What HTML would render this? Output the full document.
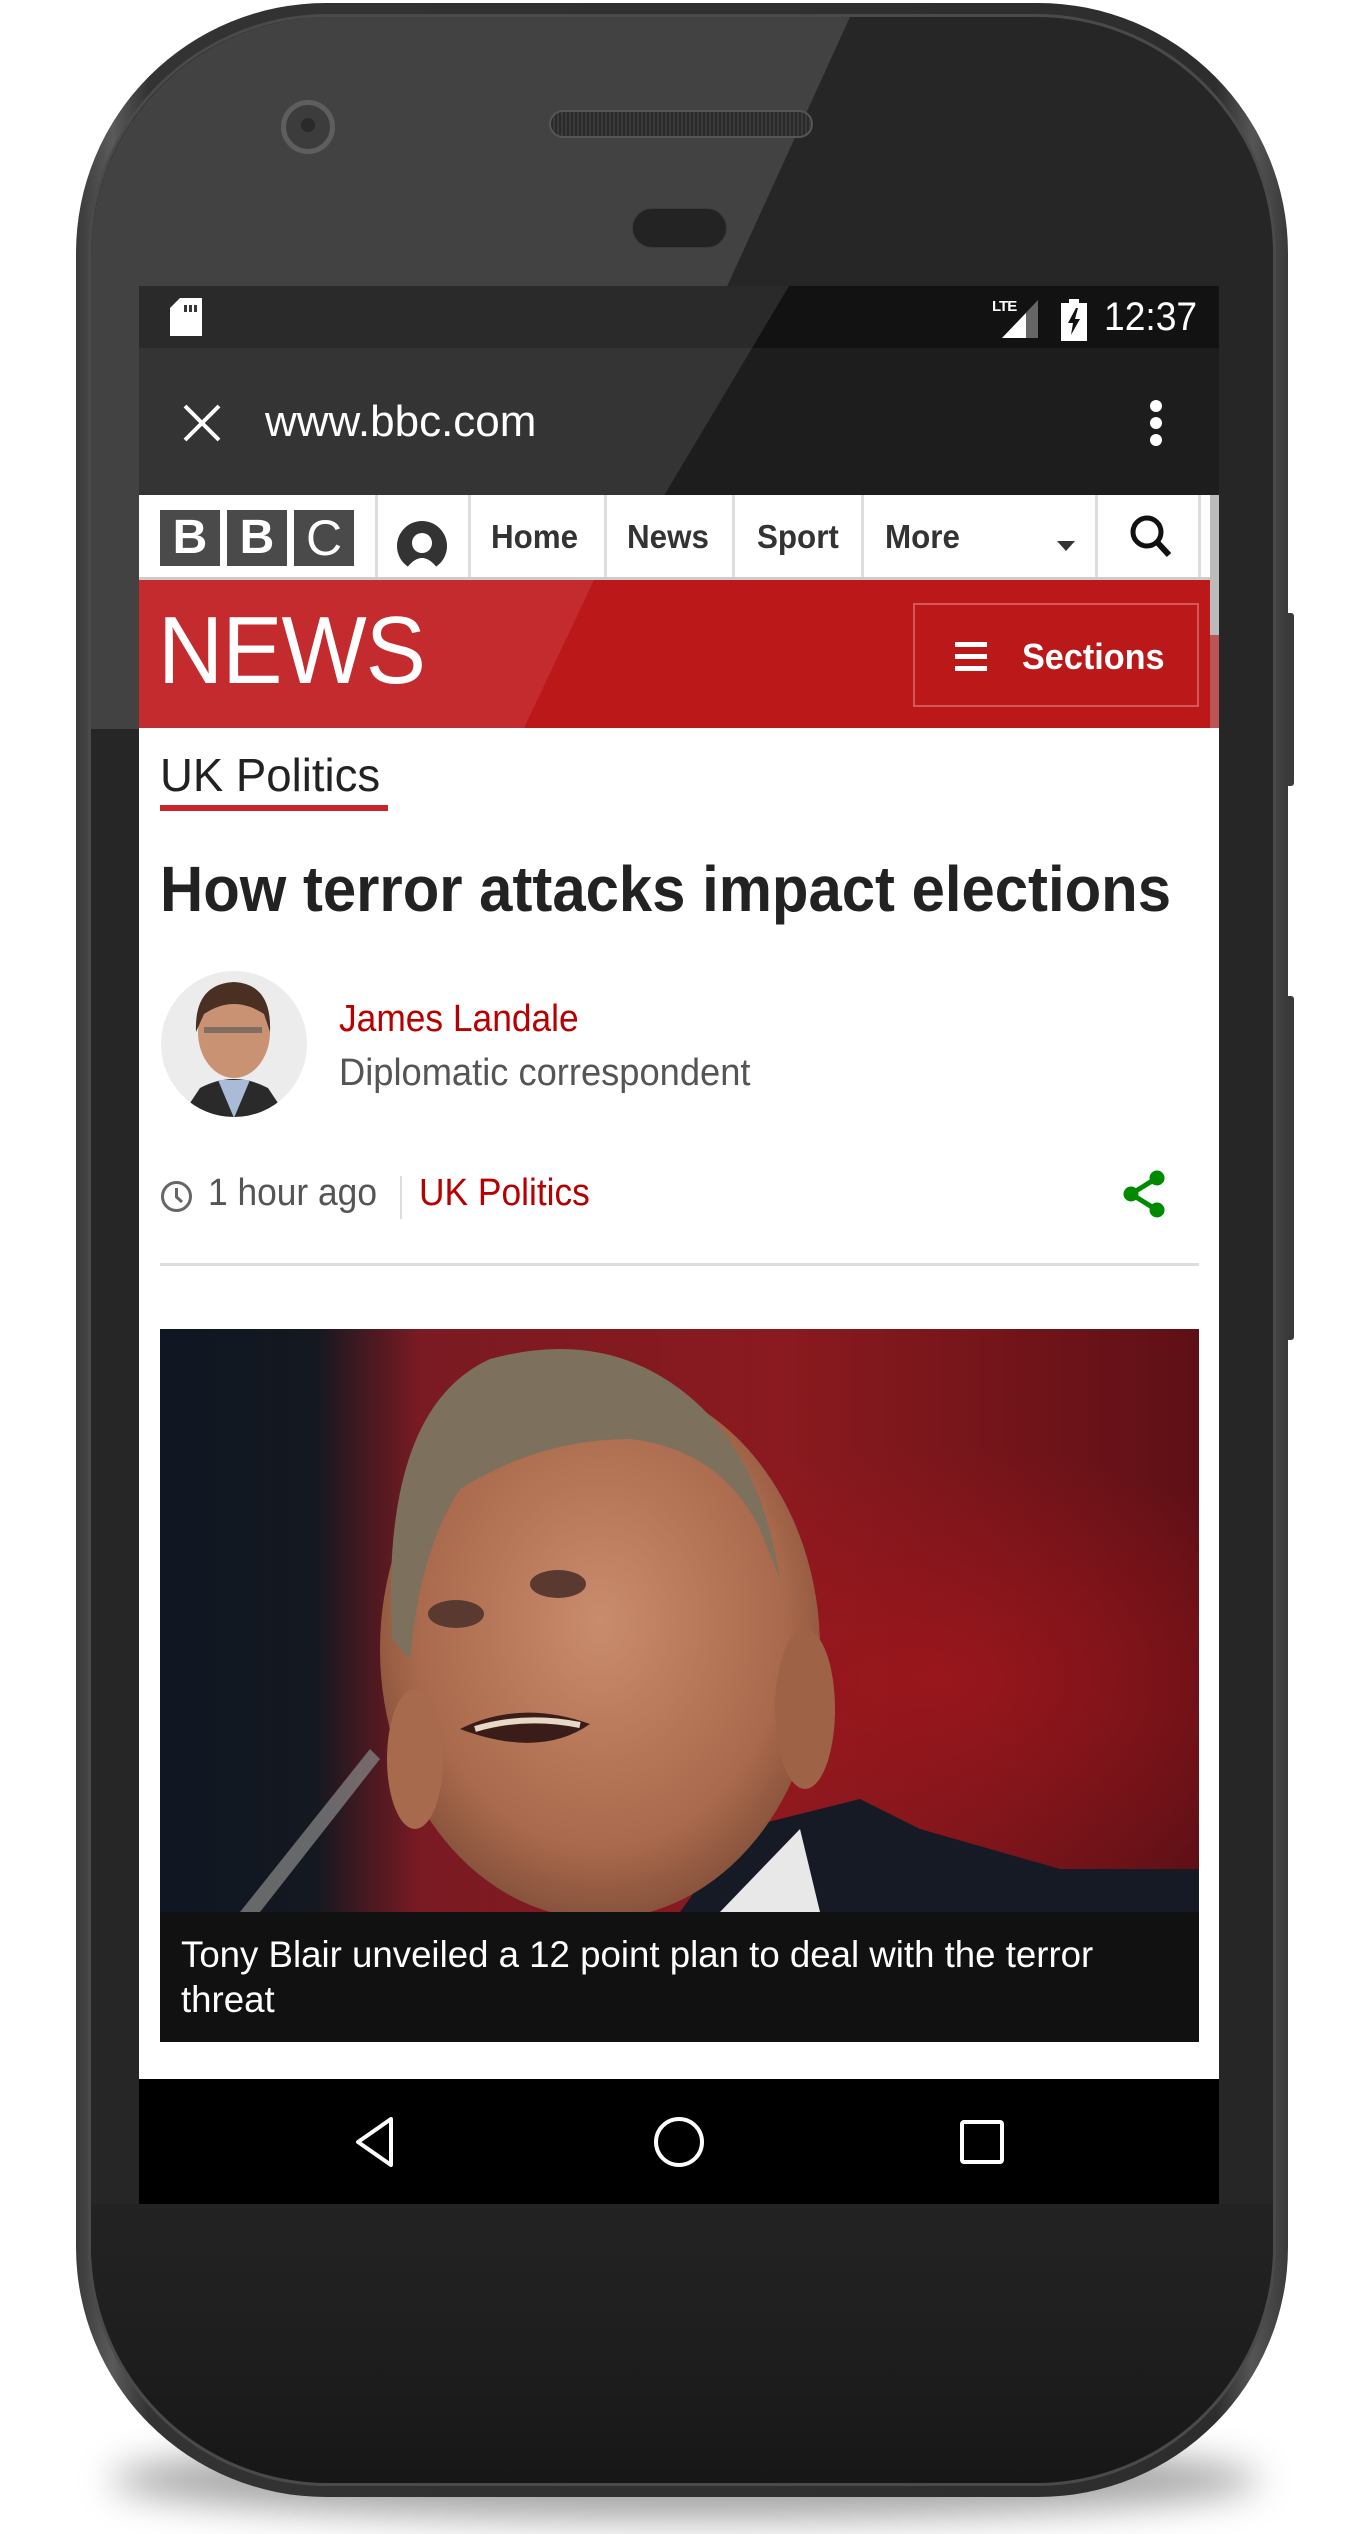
<!DOCTYPE html>
<html><head><meta charset="utf-8">
<style>
*{margin:0;padding:0;box-sizing:border-box}
body{width:1370px;height:2534px;background:#fff;position:relative;overflow:hidden;font-family:"Liberation Sans",Arial,sans-serif}
.abs{position:absolute}
.sx{display:inline-block;white-space:nowrap;transform-origin:left center}
</style></head><body>
<div class="abs" style="left:110px;top:2440px;width:1150px;height:80px;border-radius:50%;background:rgba(0,0,0,0.35);filter:blur(18px)"></div>
<div class="abs" style="left:76px;top:3px;width:1212px;height:2494px;border-radius:250px;background:linear-gradient(90deg,#3a3a3a,#5a5a5a 3%,#333 6%,#2d2d2d 94%,#555 97%,#3a3a3a);"></div>
<div class="abs" style="left:88px;top:14px;width:1188px;height:2472px;border-radius:240px;background:#262626;border:3px solid #4a4a4a"></div>
<svg class="abs" style="left:0;top:0" width="1370" height="2534">
<defs><clipPath id="cb"><rect x="91" y="17" width="1182" height="2466" rx="238"/></clipPath>
<linearGradient id="bot" x1="0" y1="0" x2="0" y2="1"><stop offset="0" stop-color="#232323"/><stop offset="0.5" stop-color="#1e1e1e"/><stop offset="1" stop-color="#161616"/></linearGradient></defs>
<g clip-path="url(#cb)">
<rect x="91" y="2204" width="1182" height="290" fill="url(#bot)"/>
<polygon points="91,17 850,17 525,729 91,729" fill="rgba(255,255,255,0.13)"/>
</g>
</svg>
<div class="abs" style="left:1286px;top:613px;width:8px;height:173px;background:#3a3a3a;border-radius:0 3px 3px 0"></div>
<div class="abs" style="left:1286px;top:996px;width:8px;height:344px;background:#3a3a3a;border-radius:0 3px 3px 0"></div>
<div class="abs" style="left:281px;top:100px;width:54px;height:54px;border-radius:50%;background:#3c3c3c;border:5px solid #5e5e5e"></div>
<div class="abs" style="left:301px;top:118px;width:14px;height:14px;border-radius:50%;background:#2a2a2a"></div>
<div class="abs" style="left:549px;top:110px;width:264px;height:28px;border-radius:14px;background:repeating-linear-gradient(90deg,#2a2a2a 0 2px,#3a3a3a 2px 4px);border:2px solid #555"></div>
<div class="abs" style="left:632px;top:208px;width:95px;height:40px;border-radius:20px;background:#232323;border:1px solid #3a3a3a"></div>

<div class="abs" style="left:139px;top:286px;width:1080px;height:1918px;overflow:hidden;background:#fff">
 <div class="abs" style="left:0;top:0;width:1080px;height:62px;background:#121212"></div>
 <svg class="abs" style="left:31px;top:12px" width="32" height="38"><path d="M10 0H32V38H0V10Z" fill="#fff"/><rect x="14" y="7" width="3" height="7" fill="#222"/><rect x="19" y="7" width="3" height="7" fill="#222"/><rect x="24" y="7" width="3" height="7" fill="#222"/></svg>
 <div class="abs" style="left:853px;top:12px;color:#fff;font-size:15px;font-weight:bold;letter-spacing:-1px">LTE</div>
 <svg class="abs" style="left:863px;top:14px" width="40" height="40"><polygon points="0,38 36,0 36,38" fill="#666"/><polygon points="0,38 24,13 24,38" fill="#fff"/></svg>
 <svg class="abs" style="left:922px;top:13px" width="26" height="42"><rect x="8" y="0" width="10" height="4" fill="#fff"/><rect x="0" y="4" width="26" height="38" fill="#fff"/><polygon points="15,9 7,24 12,24 10,36 19,20 14,20 17,9" fill="#121212"/></svg>
 <div class="abs" style="left:965px;top:9px;color:#fff;font-size:40px"><span class="sx" style="transform:scaleX(0.93)">12:37</span></div>
 <div class="abs" style="left:0;top:62px;width:1080px;height:147px;background:#1d1d1d"></div>
 <svg class="abs" style="left:44px;top:118px" width="38" height="38"><path d="M2 2L36 36M36 2L2 36" stroke="#fff" stroke-width="4"/></svg>
 <div class="abs" style="left:126px;top:111px;color:#fff;font-size:44px"><span class="sx" style="transform:scaleX(1.0)">www.bbc.com</span></div>
 <svg class="abs" style="left:1006px;top:114px" width="22" height="50"><circle cx="11" cy="6" r="6" fill="#fff"/><circle cx="11" cy="23" r="6" fill="#fff"/><circle cx="11" cy="40" r="6" fill="#fff"/></svg>
 <svg class="abs" style="left:0;top:0" width="1080" height="443"><polygon points="0,0 650,0 386,443 0,443" fill="rgba(255,255,255,0.1)"/></svg>
 <div class="abs" style="left:0;top:209px;width:1080px;height:85px;background:#fff;border-bottom:3px solid #ccc"></div>
 <div class="abs" style="left:21px;top:224px;width:60px;height:56px;background:#4a4a4a;color:#fff;font-size:48px;font-weight:bold;text-align:center;line-height:56px">B</div>
 <div class="abs" style="left:88px;top:224px;width:60px;height:56px;background:#4a4a4a;color:#fff;font-size:48px;font-weight:bold;text-align:center;line-height:56px">B</div>
 <div class="abs" style="left:155px;top:224px;width:60px;height:56px;background:#4a4a4a;color:#fff;font-size:50px;text-align:center;line-height:56px">C</div>
 <div class="abs" style="left:236px;top:209px;width:3px;height:82px;background:#ddd"></div>
 <div class="abs" style="left:329px;top:209px;width:3px;height:82px;background:#ddd"></div>
 <div class="abs" style="left:465px;top:209px;width:3px;height:82px;background:#ddd"></div>
 <div class="abs" style="left:593px;top:209px;width:3px;height:82px;background:#ddd"></div>
 <div class="abs" style="left:722px;top:209px;width:3px;height:82px;background:#ddd"></div>
 <div class="abs" style="left:956px;top:209px;width:3px;height:82px;background:#ddd"></div>
 <div class="abs" style="left:1059px;top:209px;width:3px;height:82px;background:#ddd"></div>
 <svg class="abs" style="left:257px;top:235px" width="52" height="48"><defs><clipPath id="ac"><rect width="52" height="46"/></clipPath></defs><g clip-path="url(#ac)"><circle cx="26" cy="25" r="25" fill="#333"/><circle cx="26" cy="22" r="10" fill="#fff"/><path d="M10 48Q26 26 42 48Z" fill="#fff"/></g></svg>
 <div class="abs" style="left:352px;top:232px;color:#333;font-size:33px;font-weight:bold"><span class="sx" style="transform:scaleX(0.95)">Home</span></div>
 <div class="abs" style="left:488px;top:232px;color:#333;font-size:33px;font-weight:bold"><span class="sx" style="transform:scaleX(0.95)">News</span></div>
 <div class="abs" style="left:618px;top:232px;color:#333;font-size:33px;font-weight:bold"><span class="sx" style="transform:scaleX(0.95)">Sport</span></div>
 <div class="abs" style="left:746px;top:232px;color:#333;font-size:33px;font-weight:bold"><span class="sx" style="transform:scaleX(0.95)">More</span></div>
 <svg class="abs" style="left:918px;top:255px" width="18" height="10"><polygon points="0,0 18,0 9,10" fill="#333"/></svg>
 <svg class="abs" style="left:990px;top:228px" width="44" height="46"><circle cx="18" cy="18" r="14" fill="none" stroke="#111" stroke-width="5"/><path d="M28 28L40 41" stroke="#111" stroke-width="6"/></svg>
 <div class="abs" style="left:1071px;top:209px;width:9px;height:140px;background:#bbb"></div>
 <div class="abs" style="left:0;top:294px;width:1071px;height:148px;background:#bb1919"></div>
 <svg class="abs" style="left:0;top:294px" width="1071" height="148"><polygon points="0,0 455,0 385,148 0,148" fill="#c42b2e"/></svg>
 <div class="abs" style="left:1071px;top:349px;width:9px;height:93px;background:#b55"></div>
 <div class="abs" style="left:19px;top:310px;color:#fff;font-size:96px;letter-spacing:-1px"><span class="sx" style="transform:scaleX(0.94)">NEWS</span></div>
 <div class="abs" style="left:774px;top:317px;width:286px;height:104px;border:2px solid #d4575a"></div>
 <svg class="abs" style="left:816px;top:356px" width="32" height="30"><rect y="0" width="32" height="5" fill="#fff"/><rect y="12" width="32" height="5" fill="#fff"/><rect y="24" width="32" height="5" fill="#fff"/></svg>
 <div class="abs" style="left:883px;top:350px;color:#fff;font-size:36px;font-weight:bold"><span class="sx" style="transform:scaleX(0.95)">Sections</span></div>
 <div class="abs" style="left:21px;top:462px;color:#222;font-size:46px"><span class="sx" style="transform:scaleX(0.99)">UK Politics</span></div>
 <div class="abs" style="left:21px;top:519px;width:228px;height:6px;background:#c8262b"></div>
 <div class="abs" style="left:21px;top:566px;color:#222;font-size:64px;font-weight:bold"><span class="sx" style="transform:scaleX(0.935)">How terror attacks impact elections</span></div>
 <svg class="abs" style="left:21px;top:684px" width="148" height="148"><defs><clipPath id="av"><circle cx="74" cy="74" r="73"/></clipPath></defs><g clip-path="url(#av)"><rect width="148" height="148" fill="#ececec"/><path d="M20 148L40 118Q74 100 108 118L128 148Z" fill="#2a2a2a"/><path d="M58 110L74 148L90 110Z" fill="#a9bbd6"/><ellipse cx="74" cy="62" rx="36" ry="46" fill="#c99272"/><path d="M36 62Q34 14 74 12Q112 14 110 62L104 44Q74 24 44 44Z" fill="#4a3022"/><rect x="44" y="57" width="58" height="6" fill="#555" opacity="0.6"/></g></svg>
 <div class="abs" style="left:200px;top:712px;color:#b80000;font-size:38px"><span class="sx" style="transform:scaleX(0.93)">James Landale</span></div>
 <div class="abs" style="left:200px;top:766px;color:#555;font-size:38px"><span class="sx" style="transform:scaleX(0.955)">Diplomatic correspondent</span></div>
 <svg class="abs" style="left:21px;top:894px" width="33" height="33"><circle cx="16.5" cy="16.5" r="14" fill="none" stroke="#666" stroke-width="3"/><path d="M16.5 8V17L22 22" fill="none" stroke="#666" stroke-width="3"/></svg>
 <div class="abs" style="left:69px;top:886px;color:#555;font-size:38px"><span class="sx" style="transform:scaleX(0.93)">1 hour ago</span></div>
 <div class="abs" style="left:261px;top:890px;width:2px;height:43px;background:#ddd"></div>
 <div class="abs" style="left:280px;top:886px;color:#b80000;font-size:38px"><span class="sx" style="transform:scaleX(0.93)">UK Politics</span></div>
 <svg class="abs" style="left:982px;top:884px" width="46" height="48"><path d="M36 8L10 24L36 40" fill="none" stroke="#008a00" stroke-width="5"/><circle cx="36" cy="8" r="7.5" fill="#008a00"/><circle cx="10" cy="24" r="7.5" fill="#008a00"/><circle cx="36" cy="40" r="7.5" fill="#008a00"/></svg>
 <div class="abs" style="left:21px;top:977px;width:1039px;height:3px;background:#ddd"></div>
 <svg class="abs" style="left:21px;top:1043px" width="1039" height="583">
  <defs>
   <linearGradient id="bg" x1="0" y1="0" x2="1" y2="0"><stop offset="0" stop-color="#101722"/><stop offset="0.15" stop-color="#141820"/><stop offset="0.25" stop-color="#7a1a22"/><stop offset="0.6" stop-color="#8a1a1f"/><stop offset="1" stop-color="#5e1016"/></linearGradient>
   <radialGradient id="glow" cx="0.75" cy="0.6" r="0.4"><stop offset="0" stop-color="#a0161c" stop-opacity="0.8"/><stop offset="1" stop-color="#a0161c" stop-opacity="0"/></radialGradient>
   <radialGradient id="skin" cx="0.5" cy="0.45" r="0.6"><stop offset="0" stop-color="#c98c6c"/><stop offset="0.7" stop-color="#a9694c"/><stop offset="1" stop-color="#7a4a36"/></radialGradient>
  </defs>
  <rect width="1039" height="583" fill="url(#bg)"/>
  <rect width="1039" height="583" fill="url(#glow)"/>
  <path d="M80 583L210 420L220 430L100 583Z" fill="#8a8a8a" opacity="0.7"/>
  <path d="M520 583L580 500L700 470L760 500L900 540L1039 540L1039 583Z" fill="#161a24"/>
  <path d="M560 583L640 500L660 583Z" fill="#e8e8e8"/>
  <ellipse cx="440" cy="320" rx="220" ry="270" fill="url(#skin)"/>
  <path d="M232 310Q220 80 330 30Q440 0 520 60Q600 120 620 250L600 200Q560 120 470 110Q380 110 300 160Q260 220 250 330Z" fill="#7d705c"/>
  <ellipse cx="255" cy="430" rx="28" ry="70" fill="#a86a4c"/>
  <ellipse cx="645" cy="380" rx="30" ry="80" fill="#9e6347"/>
  <ellipse cx="296" cy="285" rx="28" ry="14" fill="#5a3a30"/>
  <ellipse cx="398" cy="255" rx="28" ry="14" fill="#5a3a30"/>
  <path d="M300 400Q360 370 430 395Q380 430 300 400Z" fill="#3a1c18"/>
  <path d="M315 400Q365 385 420 396" stroke="#e8d8c8" stroke-width="6" fill="none"/>
 </svg>
 <div class="abs" style="left:21px;top:1626px;width:1039px;height:130px;background:#111"></div>
 <div class="abs" style="left:42px;top:1646px;color:#fff;font-size:37px;line-height:45px"><span class="sx" style="transform:scaleX(0.99)">Tony Blair unveiled a 12 point plan to deal with the terror</span><br><span class="sx" style="transform:scaleX(0.99)">threat</span></div>
 <div class="abs" style="left:0;top:1793px;width:1080px;height:125px;background:#000"></div>
 <svg class="abs" style="left:214px;top:1830px" width="44" height="52"><path d="M38 3L5 26L38 49Z" fill="none" stroke="#fff" stroke-width="4" stroke-linejoin="round"/></svg>
 <svg class="abs" style="left:512px;top:1828px" width="56" height="56"><circle cx="28" cy="28" r="23" fill="none" stroke="#fff" stroke-width="4"/></svg>
 <svg class="abs" style="left:820px;top:1833px" width="46" height="46"><rect x="3" y="3" width="40" height="40" rx="2" fill="none" stroke="#fff" stroke-width="4"/></svg>
</div>
</body></html>
